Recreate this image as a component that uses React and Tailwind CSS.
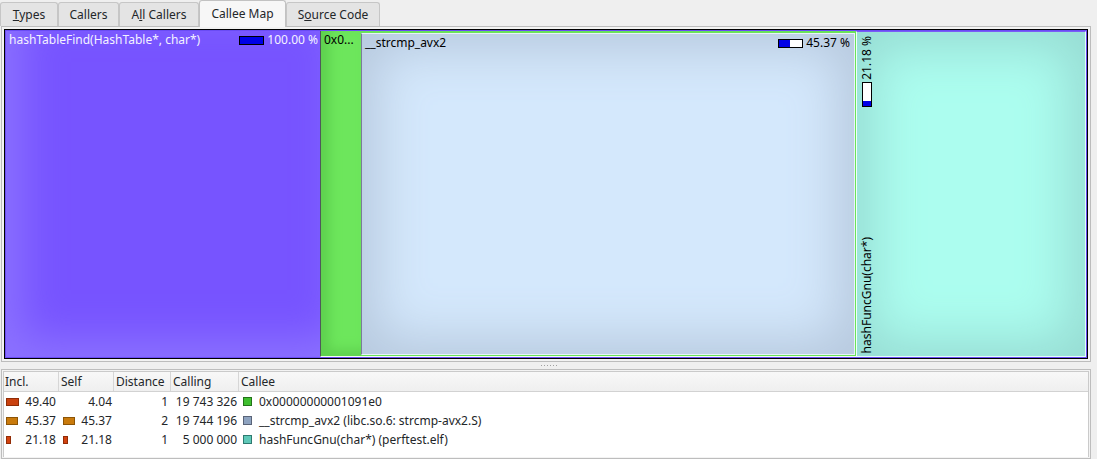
import React from "react";

function Tab({ children, active, w }) {
  return (
    <div
      className={
        active
          ? `${w} relative z-10 h-[27px] -mb-px bg-[#f7f7f7] border border-[#c2c2c2] border-b-0 rounded-t-[3px] flex items-center justify-center text-[#232629]`
          : `${w} mt-[2px] h-[24px] bg-[#e4e4e4] border border-[#c6c6c6] border-b-0 rounded-t-[3px] flex items-center justify-center text-[#232629]`
      }
    >
      {children}
    </div>
  );
}

function HBar({ pct }) {
  return (
    <div className="w-[25px] h-[9px] border border-black bg-white flex">
      <div className="h-full bg-[#0000e6]" style={{ width: `${pct}%` }} />
    </div>
  );
}

function VBar({ pct }) {
  return (
    <div className="w-[10px] h-[25px] border border-black bg-white flex flex-col justify-end">
      <div className="w-full bg-[#0000e6]" style={{ height: `${pct}%` }} />
    </div>
  );
}

function Bar({ w, color, border }) {
  return <div className={`${w} ${color} ${border} h-[8px] border`} />;
}

const rows = [
  {
    incl: "49.40",
    inclBar: ["w-[13px]", "bg-[#c9410f]", "border-[#8f2c06]"],
    self: "4.04",
    selfBar: null,
    dist: "1",
    calling: "19 743 326",
    sw: ["bg-[#3fbf2f]", "border-[#23721a]"],
    callee: "0x00000000001091e0",
  },
  {
    incl: "45.37",
    inclBar: ["w-[12px]", "bg-[#c97a0c]", "border-[#8c5406]"],
    self: "45.37",
    selfBar: ["w-[12px]", "bg-[#c97a0c]", "border-[#8c5406]"],
    dist: "2",
    calling: "19 744 196",
    sw: ["bg-[#8ea3c0]", "border-[#5a6478]"],
    callee: "__strcmp_avx2 (libc.so.6: strcmp-avx2.S)",
  },
  {
    incl: "21.18",
    inclBar: ["w-[5px]", "bg-[#d2420f]", "border-[#922c06]"],
    self: "21.18",
    selfBar: ["w-[5px]", "bg-[#d2420f]", "border-[#922c06]"],
    dist: "1",
    calling: "5 000 000",
    sw: ["bg-[#5fc8b8]", "border-[#2e7a70]"],
    callee: "hashFuncGnu(char*) (perftest.elf)",
  },
];

export default function App() {
  return (
    <div className="w-[1097px] h-[459px] overflow-hidden bg-[#efefef] font-['Noto_Sans',sans-serif] text-[12px] leading-[16px] flex flex-col">
      {/* Tabs */}
      <div className="h-[26px] flex items-start shrink-0">
        <Tab w="w-[58px]">
          <span>
            <span className="underline">T</span>ypes
          </span>
        </Tab>
        <Tab w="w-[61px]">Callers</Tab>
        <Tab w="w-[80px]">
          <span>
            A<span className="underline">l</span>l Callers
          </span>
        </Tab>
        <Tab w="w-[87px]" active>
          Callee Map
        </Tab>
        <Tab w="w-[94px]">
          <span>
            S<span className="underline">o</span>urce Code
          </span>
        </Tab>
      </div>

      {/* Map frame */}
      <div className="ml-px w-[1090px] h-[336px] shrink-0 border border-[#bcbcbc] bg-[#f2f2f2] p-[2px]">
        <div className="w-full h-full border border-black">
          <div className="w-full h-full border border-[#6a4cf4] flex bg-[#7a58ff]">
            {/* hashTableFind own */}
            <div className="w-[314px] h-full bg-[#7754ff] shadow-[inset_16px_-18px_40px_#8c72ff] pt-px pl-[3px] pr-[2px] flex items-start justify-between text-[#f4f2ff]">
              <span className="whitespace-nowrap">hashTableFind(HashTable*, char*)</span>
              <div className="flex items-center gap-[3px] whitespace-nowrap">
                <HBar pct={100} />
                <span>100.00 %</span>
              </div>
            </div>
            {/* 0x0... green */}
            <div className="w-[536px] h-full flex border-l border-l-[#4e5a58] border-b border-b-[#f4fff2] bg-[#6ae35a] pr-px">
              <div className="w-[40px] h-full shrink-0 bg-[#6de65c] shadow-[inset_8px_-6px_12px_#5ed04e] pt-px pl-[3px] text-black whitespace-nowrap overflow-hidden">
                0x0...
              </div>
              <div className="flex-1 mt-[2px] mb-px border border-[#e9f2fb] border-l-[#7a7c9a] bg-[#d4e8fc] shadow-[inset_0_0_50px_16px_#b7c9de] pt-px pl-[3px] pr-[4px] flex items-start justify-between text-black">
                <span className="whitespace-nowrap">__strcmp_avx2</span>
                <div className="flex items-center gap-[3px] whitespace-nowrap">
                  <HBar pct={45.37} />
                  <span>45.37 %</span>
                </div>
              </div>
            </div>
            {/* hashFuncGnu */}
            <div className="flex-1 h-full border border-[#e4fffa] border-l-[#f0fff8] border-t-[#7a5cf6] bg-[#acfdef] shadow-[inset_0_0_50px_16px_#97dcd3] flex">
              <div className="h-full pl-[2px] pt-[4px] pb-[3px] flex flex-col justify-between items-center text-black">
                <div className="flex flex-col items-center gap-[2px]">
                  <span className="[writing-mode:vertical-rl] rotate-180 whitespace-nowrap">21.18 %</span>
                  <VBar pct={21.18} />
                </div>
                <span className="[writing-mode:vertical-rl] rotate-180 whitespace-nowrap">hashFuncGnu(char*)</span>
              </div>
            </div>
          </div>
        </div>
      </div>

      {/* Splitter */}
      <div className="h-[7px] shrink-0 flex items-center justify-center">
        <div className="ml-[2px] w-[17px] h-px bg-[repeating-linear-gradient(90deg,#a0a0a0_0_1px,transparent_1px_3px)]" />
      </div>

      {/* Table */}
      <div className="ml-px w-[1090px] flex-1 border border-[#bdbdbd] p-px bg-[#f3f3f3]">
        <div className="w-full h-full border border-[#cacaca] border-b-0 bg-white text-[#232629]">
          <div className="h-[20px] flex bg-[linear-gradient(#f8f8f8,#efefef)] border-b border-[#d2d2d2]">
            <div className="w-[55px] border-r border-[#d6d6d6] pl-px flex items-center">Incl.</div>
            <div className="w-[55px] border-r border-[#d6d6d6] pl-[2px] flex items-center">Self</div>
            <div className="w-[57px] border-r border-[#d6d6d6] pl-[2px] flex items-center">Distance</div>
            <div className="w-[68px] border-r border-[#d6d6d6] pl-[2px] flex items-center">Calling</div>
            <div className="flex-1 pl-[2px] flex items-center">Callee</div>
          </div>
          {rows.map((r, i) => (
            <div key={i} className="h-[19px] flex items-center whitespace-nowrap">
              <div className="w-[55px] pl-[2px] pr-[3px] flex items-center justify-between">
                <Bar w={r.inclBar[0]} color={r.inclBar[1]} border={r.inclBar[2]} />
                <span>{r.incl}</span>
              </div>
              <div className="w-[56px] pl-[4px] pr-[3px] flex items-center justify-between">
                {r.selfBar ? (
                  <Bar w={r.selfBar[0]} color={r.selfBar[1]} border={r.selfBar[2]} />
                ) : (
                  <span />
                )}
                <span>{r.self}</span>
              </div>
              <div className="w-[57px] pr-[4px] text-right">{r.dist}</div>
              <div className="w-[68px] pr-[3px] text-right">{r.calling}</div>
              <div className="flex-1 pl-[3px] flex items-center gap-[7px]">
                <div className={`w-[9px] h-[9px] border ${r.sw[0]} ${r.sw[1]}`} />
                <span>{r.callee}</span>
              </div>
            </div>
          ))}
        </div>
      </div>
    </div>
  );
}
